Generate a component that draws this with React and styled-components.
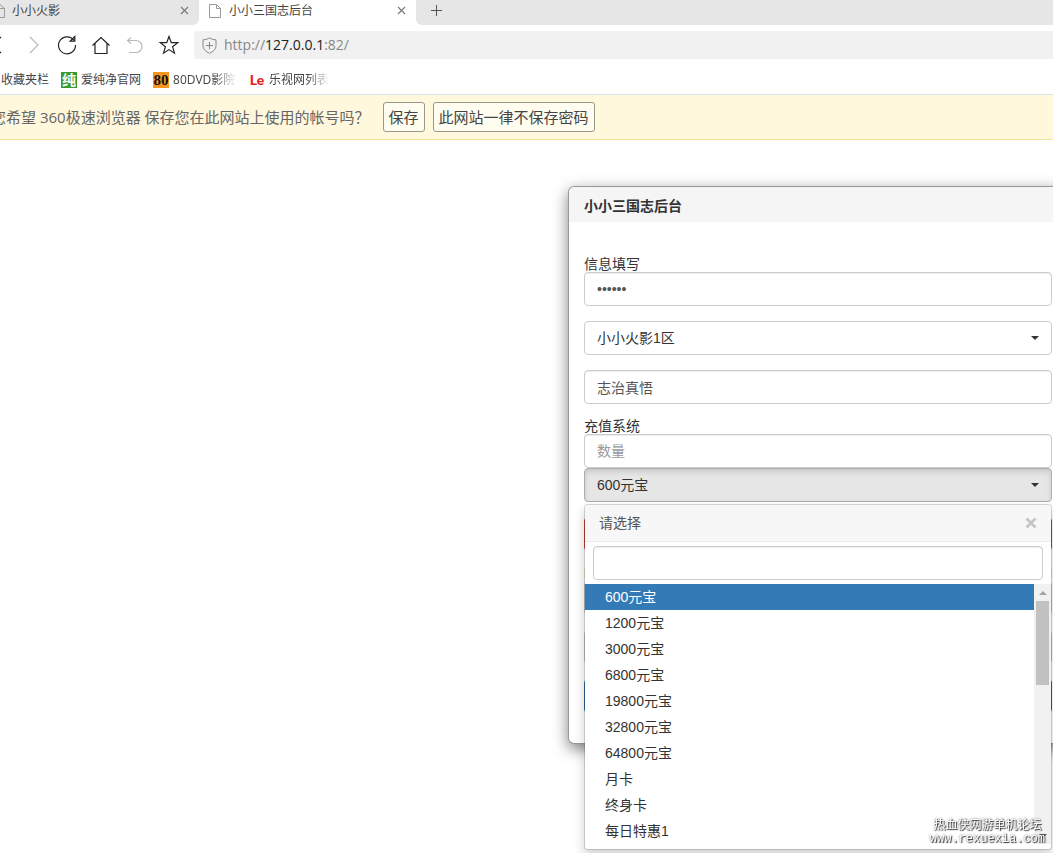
import styled, { createGlobalStyle, css } from "styled-components";

const Global = createGlobalStyle`
  * {
    box-sizing: border-box;
  }
  body {
    margin: 0;
    background: #fff;
    color: #333;
    font: 14px/20px "Liberation Sans", "Noto Sans CJK SC", sans-serif;
  }
  button, input {
    font: inherit;
    color: inherit;
  }
  ul {
    list-style: none;
    margin: 0;
    padding: 0;
  }
`;

const Page = styled.div`
  min-height: 100vh;
  overflow: hidden;
`;

const Chrome = styled.header`
  font: 12px/16px "Open Sans", "Noto Sans CJK SC", sans-serif;
`;

const TabBar = styled.div`
  display: flex;
  height: 25px;
  background: #fff;
`;

const Tab = styled.div`
  display: flex;
  align-items: center;
  flex: none;
  gap: ${(p) => (p.$active ? 8 : 7)}px;
  width: ${(p) => (p.$active ? 217 : 199)}px;
  padding: 0 10px 4px ${(p) => (p.$active ? 10 : 0)}px;
  color: #444;
  background: ${(p) => (p.$active ? "#fff" : "#e6e6e6")};
  border-radius: 0 0 ${(p) => (p.$active ? 0 : 6)}px 0;
`;

const TabTitle = styled.span`
  flex: 1;
`;

const IconButton = styled.button`
  display: flex;
  align-items: center;
  justify-content: center;
  flex: none;
  border: 0;
  padding: 0;
  background: none;
`;

const TabRest = styled.div`
  display: flex;
  flex: 1;
  padding: 0 14px 5px;
  background: #e6e6e6;
  border-radius: 0 0 0 6px;
`;

const Toolbar = styled.div`
  display: flex;
  align-items: center;
  height: 40px;
`;

const NavButtons = styled.div`
  display: flex;
  gap: 12px;
  margin-left: -12px;
  padding-right: 14px;

  button {
    width: 22px;
    height: 22px;
  }
`;

const Address = styled.div`
  display: flex;
  align-items: center;
  flex: 1;
  height: 28px;
  padding-left: 8px;
  gap: 7px;
  background: #f1f1f1;
  border-radius: 2px 0 0 2px;
  color: #888;
  font-size: 14px;

  b {
    color: #222;
    font-weight: 400;
  }
`;

const Bookmarks = styled.nav`
  display: flex;
  align-items: center;
  gap: 12px;
  height: 30px;
  padding-left: 1px;
  border-bottom: 1px solid #dfe3e8;
`;

const Bookmark = styled.a`
  display: flex;
  align-items: center;
  gap: 4px;
  color: #444;
  text-decoration: none;
  white-space: nowrap;
`;

const BookmarkText = styled.span`
  overflow: hidden;
  ${(p) =>
    p.$width &&
    css`
      width: ${p.$width}px;
      mask-image: linear-gradient(to right, #000 65%, transparent);
    `}
`;

const Favicon = styled.span`
  display: flex;
  align-items: center;
  justify-content: center;
  width: 16px;
  height: 16px;
  color: ${(p) => p.$color};
  background: ${(p) => p.$bg};
  font-weight: ${(p) => p.$weight || 700};
  font-size: ${(p) => p.$size}px;
  font-family: ${(p) => p.$family || "Lato"}, "Noto Sans CJK SC", sans-serif;
`;

const SaveBar = styled.div`
  display: flex;
  align-items: center;
  gap: 8px;
  height: 45px;
  background: #fff8dc;
  border-bottom: 1px solid #f2e2a0;
  color: #666;
  font-size: 15px;
  line-height: 20px;
  white-space: nowrap;
`;

const SaveText = styled.span`
  margin-left: -9px;
  margin-right: 5px;
`;

const SaveButton = styled.button`
  height: 30px;
  padding: 0 5px;
  border: 1px solid #999788;
  border-radius: 3px;
  background: #fffdf0;
  color: #444;
`;

const Stage = styled.main`
  display: flex;
  justify-content: flex-end;
  padding-top: 46px;
`;

const Modal = styled.section`
  flex: none;
  width: 500px;
  margin-right: -15px;
  border: 1px solid rgba(0, 0, 0, 0.4);
  border-radius: 6px;
  background: #fff;
  box-shadow: 0 5px 15px rgba(0, 0, 0, 0.5);
`;

const ModalTitle = styled.h1`
  margin: 0;
  padding: 9px 15px 6px;
  border-radius: 6px 6px 0 0;
  background: #f5f5f5;
  font-size: 14px;
  line-height: 20px;
`;

const Form = styled.form`
  display: flex;
  flex-direction: column;
  padding: 32px 15px 30px;
`;

const Field = styled.div`
  display: flex;
  flex-direction: column;
  margin-bottom: ${(p) => p.$gap ?? 15}px;
`;

const Label = styled.label`
  height: 18px;
  line-height: 20px;
`;

const control = css`
  width: 100%;
  height: 34px;
  padding: 6px 12px;
  border: 1px solid #ccc;
  border-radius: 4px;
`;

const Input = styled.input`
  ${control}
  background: #fff;
  color: #555;
  box-shadow: inset 0 1px 1px rgba(0, 0, 0, 0.075);
  outline: 0;

  &::placeholder {
    color: #999;
    opacity: 1;
  }
`;

const Picker = styled.button`
  ${control}
  display: flex;
  align-items: center;
  justify-content: space-between;
  background: #fff;

  ${(p) =>
    p.$open &&
    css`
      background: #e6e6e6;
      border-color: #adadad;
      box-shadow: inset 0 3px 5px rgba(0, 0, 0, 0.125);
    `}
`;

const Caret = styled.i`
  border: 4px solid transparent;
  border-top-color: #333;
  border-bottom: 0;
`;

const PickerWrap = styled.div`
  position: relative;
`;

const Menu = styled.div`
  position: absolute;
  top: 100%;
  left: 0;
  right: 0;
  z-index: 2;
  margin-top: 2px;
  padding-bottom: 5px;
  border: 1px solid rgba(0, 0, 0, 0.15);
  border-radius: 4px;
  background: #fff;
  background-clip: padding-box;
  box-shadow: 0 6px 12px rgba(0, 0, 0, 0.175);
`;

const MenuHeader = styled.div`
  display: flex;
  align-items: center;
  justify-content: space-between;
  height: 37px;
  padding: 0 14px;
  border-bottom: 1px solid #ebebeb;
  border-radius: 4px 4px 0 0;
  background: #f7f7f7;
  color: #555;
`;

const SearchBox = styled.div`
  padding: 4px 8px;
`;

const ListArea = styled.div`
  display: flex;
  height: 260px;
`;

const List = styled.ul`
  flex: 1;
`;

const Option = styled.li`
  height: 26px;
  padding: 3px 20px;
  color: ${(p) => (p.$selected ? "#fff" : "#333")};
  background: ${(p) => (p.$selected ? "#337ab7" : "#fff")};
`;

const Scrollbar = styled.div`
  display: flex;
  flex-direction: column;
  align-items: center;
  width: 17px;
  background: #f1f1f1;
`;

const Arrow = styled.i`
  margin: 7px 0 6px;
  border: 4px solid transparent;
  border-top: 0;
  border-bottom-color: #a3a3a3;
  ${(p) =>
    p.$down &&
    css`
      margin-top: auto;
      transform: rotate(180deg);
      border-bottom-color: #505050;
    `}
`;

const Thumb = styled.div`
  width: 13px;
  height: 84px;
  background: #c1c1c1;
`;

const Strip = styled.div`
  height: ${(p) => p.$height || 34}px;
  margin-top: ${(p) => p.$gap ?? 15}px;
  border: 1px solid ${(p) => p.$border};
  border-radius: 4px;
  background: ${(p) => p.$color || "#fff"};
`;

const Watermark = styled.div`
  position: fixed;
  right: 8px;
  bottom: 7px;
  z-index: 3;
  color: #fff;
  font: 12px/13px "Liberation Mono", "Noto Sans CJK SC", monospace;
  text-align: center;
  text-shadow: 1px 1px 1px #333, 0 0 2px #555;
`;

const PageIcon = () => (
  <svg width="12" height="14" viewBox="0 0 12 14" fill="none" stroke="#999">
    <path d="M.5.5h7l4 4v9H.5zM7.5.5v4h4" />
  </svg>
);

const CloseIcon = () => (
  <svg width="9" height="9" viewBox="0 0 9 9" stroke="#777" strokeWidth="1.1">
    <path d="M1 1l7 7M8 1l-7 7" />
  </svg>
);

const PlusIcon = () => (
  <svg width="13" height="13" viewBox="0 0 13 13" stroke="#555">
    <path d="M6.5 1v11M1 6.5h11" />
  </svg>
);

const navIcons = [
  { name: "后退", color: "#222", d: "M13 3L5 11l8 8" },
  { name: "前进", color: "#bbb", d: "M8 3l8 8-8 8" },
  {
    name: "刷新",
    color: "#222",
    d: "M17.8 6.2A8.5 8.5 0 1 0 19.5 11M18.8 2.5v4.6h-4.6z",
  },
  { name: "主页", color: "#222", d: "M2.5 11.5L11 3.5l8.5 8M5 9.5v10h12v-10" },
  {
    name: "恢复",
    color: "#bbb",
    d: "M7 3.5L3.5 6.5 7 9.5M3.5 6.5H12a6 6 0 0 1 0 12H5",
  },
  {
    name: "收藏",
    color: "#222",
    d: "M11 2.5l2.3 6.2h6.4l-5.1 4.1 1.9 6.4L11 15.6l-5.5 3.6 1.9-6.4L2.300 8.700h6.400z",
  },
];

const ShieldIcon = () => (
  <svg width="15" height="17" viewBox="0 0 15 17" fill="none" stroke="#888">
    <path d="M7.5.8c2 1.5 4 1.9 6.5 2v6c0 3.500-2.800 5.800-6.500 7.400C3.800 14.600 1 12.300 1 8.800v-6c2.500-.1 4.500-.5 6.500-2zM7.500 5v7M4 8.500h7" />
  </svg>
);

const options = [
  "600元宝",
  "1200元宝",
  "3000元宝",
  "6800元宝",
  "19800元宝",
  "32800元宝",
  "64800元宝",
  "月卡",
  "终身卡",
  "每日特惠1",
];

const BrowserChrome = () => (
  <Chrome>
    <TabBar>
      <Tab>
        <svg width="5" height="14" viewBox="0 0 5 14" fill="none" stroke="#999">
          <path d="M0 .5l4.500 4v9H0M0 4.500h4.500" />
        </svg>
        <TabTitle>小小火影</TabTitle>
        <IconButton aria-label="关闭">
          <CloseIcon />
        </IconButton>
      </Tab>
      <Tab $active>
        <PageIcon />
        <TabTitle>小小三国志后台</TabTitle>
        <IconButton aria-label="关闭">
          <CloseIcon />
        </IconButton>
      </Tab>
      <TabRest>
        <IconButton aria-label="新标签页">
          <PlusIcon />
        </IconButton>
      </TabRest>
    </TabBar>
    <Toolbar>
      <NavButtons>
        {navIcons.map((icon) => (
          <IconButton key={icon.name} aria-label={icon.name}>
            <svg
              width="22"
              height="22"
              viewBox="0 0 22 22"
              fill="none"
              stroke={icon.color}
              strokeWidth="1.2"
            >
              <path d={icon.d} />
            </svg>
          </IconButton>
        ))}
      </NavButtons>
      <Address>
        <ShieldIcon />
        <span>
          http://<b>127.0.0.1</b>:82/
        </span>
      </Address>
    </Toolbar>
    <Bookmarks>
      <Bookmark href="#">
        <BookmarkText>收藏夹栏</BookmarkText>
      </Bookmark>
      <Bookmark href="#">
        <Favicon $color="#fff" $bg="#3a9a2c" $size={14}>
          纯
        </Favicon>
        <BookmarkText>爱纯净官网</BookmarkText>
      </Bookmark>
      <Bookmark href="#">
        <Favicon
          $color="#111"
          $bg="#f7941d"
          $size={15}
          $family="Liberation Serif"
        >
          80
        </Favicon>
        <BookmarkText $width={64}>80DVD影院</BookmarkText>
      </Bookmark>
      <Bookmark href="#">
        <Favicon $color="#e3241b" $size={14} $weight={900}>
          Le
        </Favicon>
        <BookmarkText $width={60}>乐视网列表</BookmarkText>
      </Bookmark>
    </Bookmarks>
    <SaveBar>
      <SaveText>您希望 360极速浏览器 保存您在此网站上使用的帐号吗？</SaveText>
      <SaveButton>保存</SaveButton>
      <SaveButton>此网站一律不保存密码</SaveButton>
    </SaveBar>
  </Chrome>
);

const App = () => {
  return (
    <Page>
      <Global />
      <BrowserChrome />
      <Stage>
        <Modal>
          <ModalTitle>小小三国志后台</ModalTitle>
          <Form>
            <Field>
              <Label htmlFor="code">信息填写</Label>
              <Input id="code" type="password" defaultValue="123456" />
            </Field>
            <Field>
              <Picker type="button">
                小小火影1区
                <Caret />
              </Picker>
            </Field>
            <Field $gap={12}>
              <Input aria-label="角色" defaultValue="志治真悟" />
            </Field>
            <Field $gap={0}>
              <Label htmlFor="amount">充值系统</Label>
              <Input id="amount" placeholder="数量" />
            </Field>
            <PickerWrap>
              <Picker type="button" $open>
                600元宝
                <Caret />
              </Picker>
              <Menu>
                <MenuHeader>
                  请选择
                  <IconButton type="button" aria-label="关闭">
                    <svg
                      width="12"
                      height="12"
                      viewBox="0 0 12 12"
                      stroke="#c4c4c4"
                      strokeWidth="2.6"
                    >
                      <path d="M1.500 1.500l9 9M10.500 1.500l-9 9" />
                    </svg>
                  </IconButton>
                </MenuHeader>
                <SearchBox>
                  <Input aria-label="搜索" />
                </SearchBox>
                <ListArea>
                  <List>
                    {options.map((name, i) => (
                      <Option key={name} $selected={i === 0}>
                        {name}
                      </Option>
                    ))}
                  </List>
                  <Scrollbar>
                    <Arrow />
                    <Thumb />
                    <Arrow $down />
                  </Scrollbar>
                </ListArea>
              </Menu>
            </PickerWrap>
            <Strip $color="#d9534f" $border="#d43f3a" />
            <Strip $height={15} $color="#fcf8e3" $border="#f0f0c0" />
            <Strip $gap={0} $border="#ccc" />
            <Strip $border="#ccc" />
            <Strip $color="#337ab7" $border="#2e6da4" />
          </Form>
        </Modal>
      </Stage>
      <Watermark>
        热血侠网游单机论坛
        <br />
        www.rexuexia.com
      </Watermark>
    </Page>
  );
};

export default App;
